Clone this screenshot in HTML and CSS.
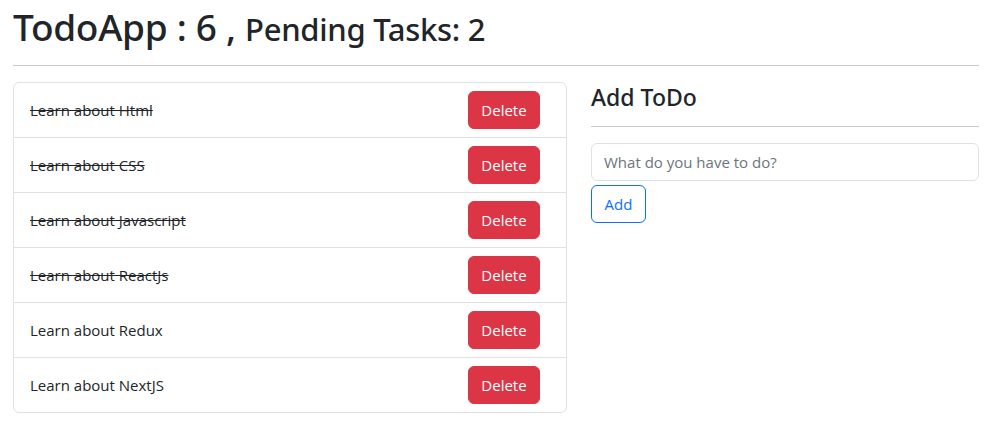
FILE: index.html
```html
<!DOCTYPE html>
<html lang="en">
<head>
<meta charset="utf-8">
<title>TodoApp</title>
<link rel="stylesheet" href="styles.css">
</head>
<body>
<div class="container">
  <h1 class="title">TodoApp : 6 , <span class="sub">Pending Tasks: 2</span></h1>
  <hr class="rule">
  <div class="row">
    <ul class="list">
      <li class="item"><span class="done">Learn about Html</span><button class="btn-del">Delete</button></li>
      <li class="item"><span class="done">Learn about CSS</span><button class="btn-del">Delete</button></li>
      <li class="item"><span class="done">Learn about Javascript</span><button class="btn-del">Delete</button></li>
      <li class="item"><span class="done">Learn about ReactJs</span><button class="btn-del">Delete</button></li>
      <li class="item"><span>Learn about Redux</span><button class="btn-del">Delete</button></li>
      <li class="item"><span>Learn about NextJS</span><button class="btn-del">Delete</button></li>
    </ul>
    <div class="side">
      <h4 class="side-title">Add ToDo</h4>
      <hr class="rule">
      <input class="input" type="text" placeholder="What do you have to do?">
      <button class="btn-add">Add</button>
    </div>
  </div>
</div>
</body>
</html>
```
FILE: styles.css
```css
* { box-sizing: border-box; }
body {
  margin: 0;
  font-family: "Open Sans", sans-serif;
  font-size: 15px;
  line-height: 24px;
  color: #212529;
  background: #fff;
}
.container { padding: 0 15px 0 13px; }
.title {
  margin: 0 0 8px;
  height: 49px;
  font-family: "Noto Sans", "Open Sans", sans-serif;
  font-size: 37px;
  line-height: 48px;
  font-weight: 500;
  padding-top: 3px;
  letter-spacing: -0.3px;
}
.sub { font-size: 31px; line-height: 1; }
.rule {
  margin: 16px 0;
  border: 0;
  border-top: 1px solid #c9cacb;
}
.row { display: flex; gap: 24px; align-items: flex-start; }
.list {
  list-style: none;
  margin: 0;
  padding: 0;
  width: 554px;
  border: 1px solid #dee2e6;
  border-radius: 6px;
}
.item {
  display: flex;
  align-items: center;
  justify-content: space-between;
  padding: 8px 26px 8px 16px;
  border-top: 1px solid #dee2e6;
}
.item:first-child { border-top: 0; }
.done { text-decoration: line-through; }
.btn-del {
  font: inherit;
  font-size: 15px;
  height: 38px;
  width: 72px;
  padding: 0;
  color: #fff;
  background: #dc3545;
  border: 1px solid #dc3545;
  border-radius: 6px;
}
.side { flex: 1; }
.side-title {
  margin: 0 0 8px;
  height: 28px;
  font-family: "Noto Sans", "Open Sans", sans-serif;
  font-size: 23px;
  line-height: 28px;
  font-weight: 500;
  padding-top: 1px;
}
.input {
  display: block;
  width: 100%;
  height: 38px;
  padding: 6px 12px;
  font: inherit;
  font-size: 15px;
  color: #212529;
  border: 1px solid #dee2e6;
  border-radius: 6px;
  outline: none;
}
.input::placeholder { color: #6c757d; }
.btn-add {
  display: block;
  margin-top: 4px;
  height: 38px;
  width: 55px;
  padding: 0;
  font: inherit;
  font-size: 15px;
  color: #0d6efd;
  background: #fff;
  border: 1px solid #0d6efd;
  border-radius: 6px;
}
```
